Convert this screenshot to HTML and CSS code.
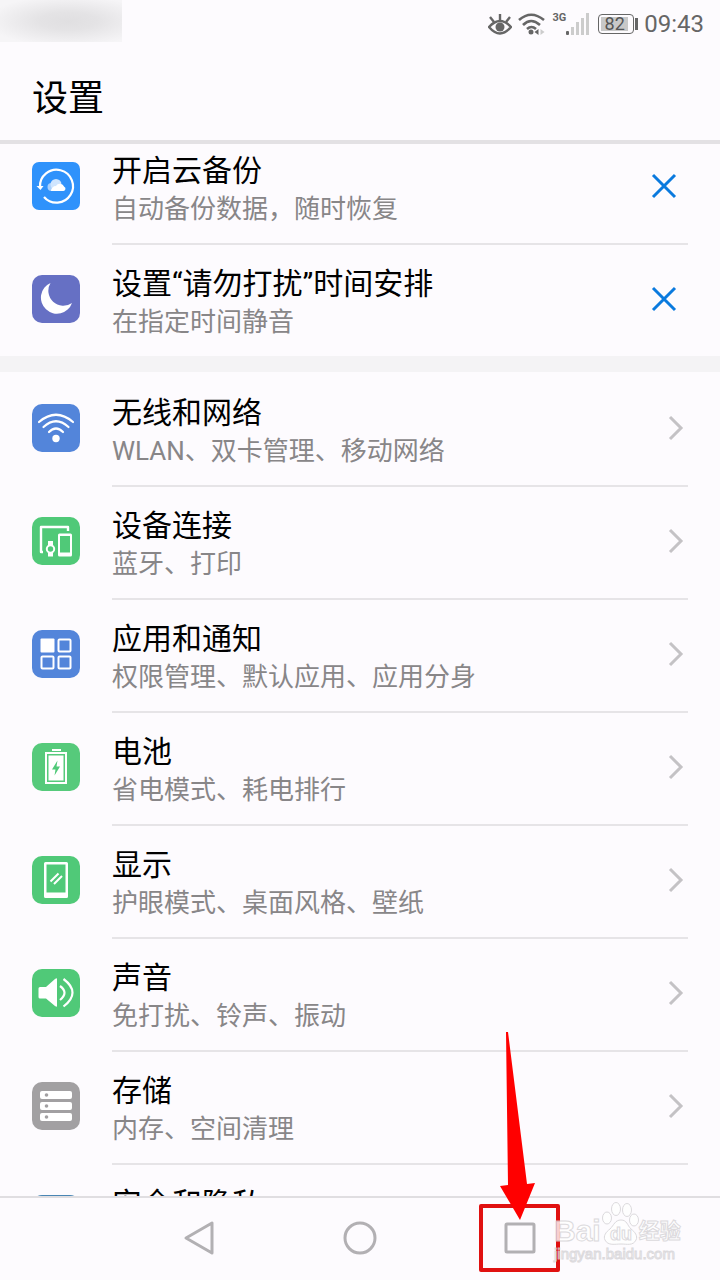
FILE: index.html
```html
<!DOCTYPE html>
<html lang="zh-CN">
<head>
  <meta charset="UTF-8" />
  <meta name="viewport" content="width=device-width, initial-scale=1.0"/>
  <title>设置</title>
  <link rel="stylesheet" href="styles.css">
</head>
<body>
  <div class="statusbar">
    <div class="carrier"></div>
    <div class="status-icons">
      <svg width="24" height="22" viewBox="0 0 24 22" fill="none" stroke="#666" stroke-width="2.400">
        <path d="M1 14 Q12 2 23 14 Q12 27 1 14 Z"/>
        <path d="M12 1v6M2 4l4 5M22 4l-4 5"/>
        <circle cx="12" cy="14" r="4.500" fill="#666" stroke="none"/>
      </svg>
      <svg width="28" height="22" viewBox="0 0 28 22" fill="none" stroke="#666" stroke-width="2.600">
        <path d="M1 7 Q13 -3.500 26 7"/>
        <path d="M5 12 Q13 4 22 12"/>
        <path d="M9 16 Q13.500 12 18 16"/>
        <circle cx="13" cy="19" r="2.500" fill="#666" stroke="none"/>
        <path d="M20.500 16v6l-4-3z" fill="#666" stroke="none"/>
        <path d="M22.500 16v6l4-3z" fill="#ccc" stroke="none"/>
      </svg>
      <div class="signal">
        <span class="net">3G</span>
        <svg width="24" height="22" viewBox="0 0 24 22">
          <rect x="0" y="18" width="3" height="4" rx="1" fill="#666"/>
          <rect x="5" y="14" width="3" height="8" fill="#ccc"/>
          <rect x="10" y="9" width="3" height="13" fill="#ccc"/>
          <rect x="15" y="5" width="3" height="17" fill="#ccc"/>
          <rect x="20" y="0" width="3" height="22" fill="#ccc"/>
        </svg>
      </div>
      <div class="battery"><span>82</span></div>
      <span class="time">09:43</span>
    </div>
  </div>

  <header class="header">
    <h1>设置</h1>
  </header>

  <main class="content">
    <div class="list">
      <section class="group">
        <div class="row">
          <svg class="icon" viewBox="0 0 48 48">
            <rect width="48" height="48" rx="7" fill="#2f92fb"/>
            <path d="M8 25 A16.500 16.500 0 1 1 12 35" fill="none" stroke="#fff" stroke-width="2.2"/>
            <path d="M4.500 24h7l-3 4z" fill="#fff"/>
            <circle cx="19.500" cy="25" r="4" fill="#a8d0fd"/>
            <circle cx="24" cy="22.500" r="5.500" fill="#cfe5fe"/>
            <path d="M19 29a5 5 0 0 1 5-5a4.500 4.500 0 0 1 8.200.8a2.200 2.200 0 0 1-1 4.200z" fill="#fff"/>
          </svg>
          <a class="text" href="#">
            <span class="title">开启云备份</span>
            <span class="sub">自动备份数据，随时恢复</span>
          </a>
          <button class="close" aria-label="关闭">
            <svg width="26" height="26" viewBox="0 0 26 26"><path d="M2 2l22 22M24 2L2 24"/></svg>
          </button>
        </div>
        <div class="row">
          <svg class="icon" viewBox="0 0 48 48">
            <rect width="48" height="48" rx="10" fill="#6670c4"/>
            <path d="M18.500 8 A16 16 0 1 0 40 28 A15 15 0 0 1 18.500 8Z" fill="#fff"/>
          </svg>
          <a class="text" href="#">
            <span class="title">设置“请勿打扰”时间安排</span>
            <span class="sub">在指定时间静音</span>
          </a>
          <button class="close" aria-label="关闭">
            <svg width="26" height="26" viewBox="0 0 26 26"><path d="M2 2l22 22M24 2L2 24"/></svg>
          </button>
        </div>
      </section>

      <section class="group">
        <a class="row" href="#">
          <svg class="icon" viewBox="0 0 48 48">
            <rect width="48" height="48" rx="10" fill="#5385da"/>
            <g fill="none" stroke="#fff" stroke-width="2.2" stroke-linecap="round">
              <path d="M7 18 Q24 3.500 41 18"/>
              <path d="M11.500 23 Q24 11.500 36.500 23"/>
              <path d="M17 28 Q24 21 31 28"/>
            </g>
            <circle cx="24" cy="34.500" r="3.700" fill="#fff"/>
          </svg>
          <span class="text">
            <span class="title">无线和网络</span>
            <span class="sub">WLAN、双卡管理、移动网络</span>
          </span>
          <svg class="arrow" viewBox="0 0 16 26"><path d="M2 2l11 11L2 24"/></svg>
        </a>
        <a class="row" href="#">
          <svg class="icon" viewBox="0 0 48 48">
            <rect width="48" height="48" rx="10" fill="#50c978"/>
            <path d="M11 35H9V10H36V14" fill="none" stroke="#fff" stroke-width="2.400" stroke-linejoin="round"/>
            <path d="M27.500 16.500h11a1.500 1.500 0 0 1 1.500 1.500v20a1.500 1.500 0 0 1-1.500 1.500h-11a1.500 1.500 0 0 1-1.500-1.500v-20a1.500 1.500 0 0 1 1.500-1.500zM28 19v16.500h10v-16.500z" fill="#fff" fill-rule="evenodd"/>
            <path d="M16 24h5v4h-5zM16 35h5v4.500h-5z" fill="#fff"/>
            <circle cx="18.500" cy="32" r="3.700" fill="none" stroke="#fff" stroke-width="2"/>
          </svg>
          <span class="text">
            <span class="title">设备连接</span>
            <span class="sub">蓝牙、打印</span>
          </span>
          <svg class="arrow" viewBox="0 0 16 26"><path d="M2 2l11 11L2 24"/></svg>
        </a>
        <a class="row" href="#">
          <svg class="icon" viewBox="0 0 48 48">
            <rect width="48" height="48" rx="10" fill="#5385da"/>
            <rect x="8.500" y="8.500" width="14" height="14" rx="1" fill="#fff"/>
            <g fill="none" stroke="#fff" stroke-width="2">
              <rect x="26.500" y="9.500" width="12" height="12" rx="1"/>
              <rect x="9.500" y="26.500" width="12" height="12" rx="1"/>
              <rect x="26.500" y="26.500" width="12" height="12" rx="1"/>
            </g>
          </svg>
          <span class="text">
            <span class="title">应用和通知</span>
            <span class="sub">权限管理、默认应用、应用分身</span>
          </span>
          <svg class="arrow" viewBox="0 0 16 26"><path d="M2 2l11 11L2 24"/></svg>
        </a>
        <a class="row" href="#">
          <svg class="icon" viewBox="0 0 48 48">
            <rect width="48" height="48" rx="10" fill="#56ca7b"/>
            <path d="M20 6h9v2h-9z" fill="#fff"/>
            <rect x="14" y="10" width="20" height="30" fill="none" stroke="#fff" stroke-width="2"/>
            <rect x="16.500" y="12.500" width="15" height="25" fill="#fff"/>
            <path d="M25.500 17.500l-5.500 9h3.500l-1 6 5.500-9h-3.500z" fill="#50c978"/>
          </svg>
          <span class="text">
            <span class="title">电池</span>
            <span class="sub">省电模式、耗电排行</span>
          </span>
          <svg class="arrow" viewBox="0 0 16 26"><path d="M2 2l11 11L2 24"/></svg>
        </a>
        <a class="row" href="#">
          <svg class="icon" viewBox="0 0 48 48">
            <rect width="48" height="48" rx="10" fill="#50c978"/>
            <path d="M13.500 6h21a1.500 1.500 0 0 1 1.500 1.500v33a1.500 1.500 0 0 1-1.500 1.500h-21a1.500 1.500 0 0 1-1.500-1.500v-33a1.500 1.500 0 0 1 1.500-1.500zM14.500 8.500v28h19v-28z" fill="#fff" fill-rule="evenodd"/>
            <path d="M18.500 25.500l8-8M22 28l8-8" stroke="#fff" stroke-width="2"/>
          </svg>
          <span class="text">
            <span class="title">显示</span>
            <span class="sub">护眼模式、桌面风格、壁纸</span>
          </span>
          <svg class="arrow" viewBox="0 0 16 26"><path d="M2 2l11 11L2 24"/></svg>
        </a>
        <a class="row" href="#">
          <svg class="icon" viewBox="0 0 48 48">
            <rect width="48" height="48" rx="10" fill="#50c978"/>
            <path d="M8 18h6l9-8q2-1.500 2 0v27q0 1.500-2 0l-9-7.500h-6q-1.500 0-1.500-1.500v-8.500q0-1.500 1.500-1.500z" fill="#fff"/>
            <path d="M28 17q9 6.500 0 14M31.500 10q18 13.500 0 27.500" fill="none" stroke="#fff" stroke-width="2.200"/>
          </svg>
          <span class="text">
            <span class="title">声音</span>
            <span class="sub">免打扰、铃声、振动</span>
          </span>
          <svg class="arrow" viewBox="0 0 16 26"><path d="M2 2l11 11L2 24"/></svg>
        </a>
        <a class="row" href="#">
          <svg class="icon" viewBox="0 0 48 48">
            <rect width="48" height="48" rx="10" fill="#a2a0a2"/>
            <g fill="#fff">
              <rect x="8" y="9" width="32" height="8" rx="2"/>
              <rect x="8" y="20" width="32" height="8" rx="2"/>
              <rect x="8" y="31" width="32" height="8" rx="2"/>
            </g>
            <g fill="#a2a0a2">
              <circle cx="14.500" cy="13" r="1.800"/>
              <circle cx="14.500" cy="24" r="1.800"/>
              <circle cx="14.500" cy="35" r="1.800"/>
            </g>
          </svg>
          <span class="text">
            <span class="title">存储</span>
            <span class="sub">内存、空间清理</span>
          </span>
          <svg class="arrow" viewBox="0 0 16 26"><path d="M2 2l11 11L2 24"/></svg>
        </a>
        <a class="row" href="#">
          <svg class="icon" viewBox="0 0 48 48">
            <rect width="48" height="48" rx="10" fill="#4a86b4"/>
          </svg>
          <span class="text">
            <span class="title">安全和隐私</span>
          </span>
        </a>
      </section>
    </div>
  </main>

  <nav class="navbar">
    <button aria-label="返回">
      <svg width="36" height="36" viewBox="0 0 36 36"><path d="M30 3v30L4 18z"/></svg>
    </button>
    <button aria-label="主屏幕">
      <svg width="36" height="36" viewBox="0 0 36 36"><circle cx="18" cy="18" r="15"/></svg>
    </button>
    <button class="recent" aria-label="最近任务">
      <svg width="36" height="36" viewBox="0 0 36 36"><rect x="4" y="4" width="28" height="28" rx="1"/></svg>
      <span class="mark"></span>
      <svg class="pointer" width="36" height="188" viewBox="0 0 36 188"><path d="M6 0h2L27 152l8-1L20 188 0 154l8-1z"/></svg>
    </button>
    <div class="watermark">
      <div class="brand">
        <span>Bai</span>
        <svg width="38" height="44" viewBox="0 0 38 44">
          <ellipse cx="6" cy="16" rx="4.500" ry="6"/>
          <ellipse cx="15" cy="7" rx="4.500" ry="6.500"/>
          <ellipse cx="26" cy="8" rx="4.500" ry="6.500"/>
          <ellipse cx="33" cy="18" rx="4.500" ry="6"/>
          <path d="M20 18c-6 0-7 5-11 9c-4 3-7 7-5 11c3 6 10 4 16 4s12 2 15-4c2-4-1-8-5-11c-4-4-4-9-10-9z"/>
          <text x="20" y="38" text-anchor="middle">du</text>
        </svg>
        <span class="cn">经验</span>
      </div>
      <div class="url">jingyan.baidu.com</div>
    </div>
  </nav>
</body>
</html>
```
FILE: styles.css
```css
* {
  box-sizing: border-box;
}
body {
  margin: 0;
  height: 100vh;
  display: flex;
  flex-direction: column;
  overflow: hidden;
  background: #fdfbfe;
  color: #000;
  font-family: Roboto, "Noto Sans CJK SC", sans-serif;
}
a {
  color: inherit;
  text-decoration: none;
}
button {
  border: none;
  background: none;
  padding: 0;
  cursor: pointer;
}

/* status bar */
.statusbar {
  display: flex;
  justify-content: space-between;
  align-items: flex-start;
  height: 48px;
  padding-right: 16px;
}
.carrier {
  width: 122px;
  height: 42px;
  background: radial-gradient(ellipse at 56% 50%, #e0dfe1 0%, #e4e3e5 30%, #f6f5f7 85%);
}
.status-icons {
  display: flex;
  align-items: center;
  gap: 6px;
  height: 48px;
}
.signal {
  display: flex;
  align-items: flex-end;
}
.net {
  align-self: flex-start;
  font-size: 11px;
  line-height: 10px;
  font-weight: bold;
  color: #666;
}
.battery {
  position: relative;
  width: 36px;
  height: 20px;
  margin: 0 4px 0 2px;
  padding: 2px 5px 2px 2px;
  border: 1px solid #666;
  border-radius: 4px;
}
.battery span {
  display: block;
  background: #c8c8c8;
  font-size: 18px;
  line-height: 14px;
  text-align: center;
  color: #555;
}
.battery::after {
  content: "";
  position: absolute;
  top: 3px;
  right: -5px;
  width: 3px;
  height: 12px;
  background: #666;
}
.time {
  font-size: 24px;
  color: #666;
}

/* title */
.header {
  height: 96px;
  padding: 25px 32px 0;
  border-bottom: 4px solid #e3e1e4;
}
.header h1 {
  margin: 0;
  font-size: 36px;
  line-height: 52px;
  font-weight: normal;
}

/* settings list, scrolled a little under the title */
.content {
  flex: 1;
  min-height: 0;
  overflow: hidden;
}
.list {
  margin-top: -12px;
}
.group + .group {
  border-top: 16px solid #f4f3f5;
  padding-top: 2px;
}
.row {
  display: flex;
  align-items: flex-start;
  padding-left: 32px;
}
.icon {
  flex: none;
  width: 48px;
  height: 48px;
  margin: 30px 32px 0 0;
}
.text {
  flex: 1;
  height: 113px;
  padding-top: 20px;
  border-bottom: 2px solid #e6e4e7;
}
.title,
.sub {
  display: block;
  line-height: 38px;
  white-space: nowrap;
}
.title {
  font-size: 30px;
}
.sub {
  font-size: 26px;
  color: #888688;
}
.close,
.arrow {
  flex: none;
  height: 113px;
  margin-right: 32px;
  border-bottom: 2px solid #e6e4e7;
}
.close {
  width: 48px;
  padding-bottom: 3px;
}
.close svg {
  display: block;
  margin: 0 auto;
  fill: none;
  stroke: #0a7ade;
  stroke-width: 3;
}
.arrow {
  width: 24px;
  padding: 41px 4px 44px 4px;
  fill: none;
  stroke: #c4c2c5;
  stroke-width: 3;
}
.group:first-child .row:last-child > * {
  border-bottom: none;
}
.group:first-child .row:last-child .text,
.group:first-child .row:last-child .close {
  height: 111px;
}

/* navigation */
.navbar {
  position: relative;
  display: flex;
  justify-content: center;
  height: 84px;
  border-top: 2px solid #e0dee1;
  background: #fdfbfe;
}
.navbar button {
  width: 160px;
  height: 80px;
}
.navbar button > svg {
  fill: none;
  stroke: #b2b0b3;
  stroke-width: 3;
  stroke-linejoin: round;
  vertical-align: middle;
}
.recent {
  position: relative;
}
.mark {
  position: absolute;
  top: 6px;
  left: 39px;
  width: 81px;
  height: 68px;
  border: 4px solid #e01010;
  border-radius: 2px;
}
.navbar .pointer {
  position: absolute;
  left: 60px;
  bottom: 58px;
  fill: #f00;
  stroke: none;
}
.watermark {
  position: absolute;
  top: 4px;
  left: calc(50% + 194px);
  color: #fff;
  font-family: "Liberation Sans", "Noto Sans CJK SC", sans-serif;
  font-weight: bold;
  opacity: 0.8;
  pointer-events: none;
  -webkit-text-stroke: 1px #d4d2d5;
}
.brand {
  display: flex;
  align-items: flex-end;
  height: 44px;
  font-size: 30px;
  line-height: 30px;
}
.brand svg {
  fill: #fff;
  stroke: #d4d2d5;
  stroke-width: 1;
}
.brand text {
  font-size: 18px;
}
.brand .cn {
  font-size: 21px;
}
.url {
  font-size: 15px;
  line-height: 16px;
  font-weight: normal;
}
```
